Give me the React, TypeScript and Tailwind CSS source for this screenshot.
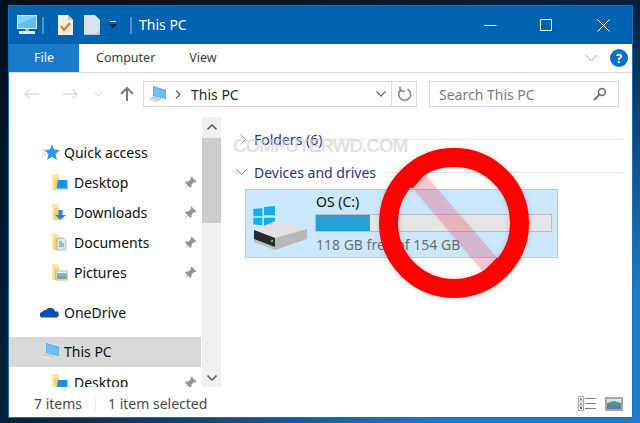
import React from "react";

const Folder = ({ overlay }: { overlay?: React.ReactNode }) => (
  <svg width="17" height="18" viewBox="0 0 17 18" className="shrink-0">
    <path d="M1 1h5l2 2v14H2.500L1 15.500z" fill="#f4d27a" />
    <path d="M1 1h5l2 2v2H3v12H2.500L1 15.500z" fill="#fbe6a8" />
    {overlay}
  </svg>
);

const overlays: Record<string, React.ReactNode> = {
  Desktop: (
    <>
      <path d="M7 7h9.500v9H5.500z" fill="#1e8fe8" />
      <path d="M5 15.500h12V17H5z" fill="#b9dcf5" />
    </>
  ),
  Downloads: (
    <path d="M7.500 7h4v5h3.500l-5.500 5-5.500-5h3.500z" fill="#2f83d6" />
  ),
  Documents: (
    <>
      <path d="M6 5h6l3 3v9H6z" fill="#dfe6ea" stroke="#9fa9ae" strokeWidth="0.8" />
      <path d="M8 9h3M8 11h5M8 13h5" stroke="#4a90c8" />
    </>
  ),
  Pictures: (
    <>
      <path d="M5 8h12v9H5z" fill="#e9eff5" stroke="#9fa9ae" strokeWidth="0.8" />
      <path d="M6 10h10v3H6z" fill="#7fb2e5" />
      <path d="M6 13h10v3H6z" fill="#8aa678" />
    </>
  ),
};

const Pin = () => (
  <svg width="13" height="13" viewBox="0 0 13 13" className="shrink-0">
    <path d="M7.500 0.500l5 5-1.500 1-1-0.500-2.500 2.500 0 2.500-1 1-2.500-2.500-3.500 3.500 3-4-2.500-2.500 1-1 2.500 0 2.500-2.500-0.500-1z" fill="#8f9499" />
  </svg>
);

const Monitor = ({ w = 20 }: { w?: number }) => (
  <svg width={w} height={w} viewBox="0 0 20 20" className="shrink-0">
    <path d="M6 2l13 4v9L6 12z" fill="#3fa6ea" />
    <path d="M6.500 3l12 3.700v7.500L6.500 11.500z" fill="#6fc0f2" />
    <path d="M2 14l5-2 8 2.500-4 3z" fill="#c8ccd0" />
    <path d="M1 16l4-1.500 6 2-3 2z" fill="#dfe2e5" />
  </svg>
);

const NavRow = ({ name }: { name: string }) => (
  <div className="flex h-[30px] items-center pl-[42px] pr-[4px] text-[14px] text-[#101010]">
    <Folder overlay={overlays[name]} />
    <span className="ml-[6px] flex-1">{name}</span>
    <Pin />
  </div>
);

export default function App() {
  return (
    <div className="relative h-[423px] w-[640px] overflow-hidden bg-[linear-gradient(to_bottom_right,#02101f_0%,#04203c_50%,#1c7ccb_85%)] pb-[5px] pl-[8px] pr-[7px] pt-[5px] font-['Noto_Sans',sans-serif]">
      <div className="flex h-full flex-col border border-[#1a6fb5] bg-white">
        {/* title bar */}
        <div className="flex h-[38px] shrink-0 items-center bg-[#0063b1] pl-[8px] text-white">
          <svg width="20" height="20" viewBox="0 0 20 20">
            <path d="M0 0h20v14H0z" fill="#cfe7f7" />
            <path d="M1 1h18v12H1z" fill="#5cc0f2" />
            <path d="M1 1h18L1 10z" fill="#8ad3f7" />
            <path d="M8 14h4v2H8z" fill="#9fb4c4" />
            <path d="M2 16h16v3H2z" fill="#e3e8ec" />
          </svg>
          <span className="ml-[5px] h-[17px] w-[2px] bg-[#4d92c9]" />
          <svg width="15" height="20" viewBox="0 0 15 20" className="ml-[14px]">
            <path d="M0 0h10l5 5v15H0z" fill="#f6ece2" />
            <path d="M10 0v5h5z" fill="#cfc8c0" />
            <path d="M3 11l3 4 6-7" fill="none" stroke="#e8662a" strokeWidth="2" />
          </svg>
          <svg width="16" height="20" viewBox="0 0 16 20" className="ml-[11px]">
            <path d="M0 0h11l5 5v15H0z" fill="#d9e4f2" />
            <path d="M16 15v5H0v-1h12z" fill="#b9c7d8" />
          </svg>
          <svg width="8" height="8" viewBox="0 0 8 8" className="ml-[9px]">
            <path d="M1 0h6v1H1z" fill="#fff" />
            <path d="M0 3h8L4 7z" fill="#061a2c" />
          </svg>
          <span className="ml-[13px] h-[17px] w-[2px] bg-[#4d92c9]" />
          <span className="ml-[7px] text-[14px] leading-none">This PC</span>
          <div className="ml-auto flex items-center pr-[22px]">
            <svg width="13" height="13" viewBox="0 0 13 13">
              <path d="M0 6.500h12.500" stroke="#fff" />
            </svg>
            <svg width="13" height="13" viewBox="0 0 13 13" className="ml-[43px]">
              <path d="M0.500 0.500h11v11h-11z" fill="none" stroke="#fff" />
            </svg>
            <svg width="13" height="13" viewBox="0 0 13 13" className="ml-[44px]">
              <path d="M0.500 0.500l12 12M12.500 0.500l-12 12" stroke="#fff" />
            </svg>
          </div>
        </div>

        {/* ribbon tabs */}
        <div className="flex h-[29px] shrink-0 items-center border-b border-[#dadbdc] text-[12.500px] text-[#3b3b3b]">
          <div className="flex h-full w-[70px] items-center justify-center bg-[#1979ca] text-white">File</div>
          <span className="ml-[17px]">Computer</span>
          <span className="ml-[34px]">View</span>
          <div className="ml-auto flex items-center pr-[4px]">
            <svg width="13" height="8" viewBox="0 0 13 8">
              <path d="M1 1l5.500 6L12 1" fill="none" stroke="#a8a8a8" />
            </svg>
            <div className="ml-[12px] flex h-[18px] w-[18px] items-center justify-center rounded-full bg-[#0a6fc9] text-[13px] font-bold leading-none text-white">
              ?
            </div>
          </div>
        </div>

        {/* address row */}
        <div className="flex h-[42px] shrink-0 items-center pl-[15px]">
          <svg width="16" height="12" viewBox="0 0 16 12">
            <path d="M15 6H1M6 1L1 6l5 5" fill="none" stroke="#dcdcdc" strokeWidth="1.500" />
          </svg>
          <svg width="16" height="12" viewBox="0 0 16 12" className="ml-[22px]">
            <path d="M1 6h14M10 1l5 5-5 5" fill="none" stroke="#dcdcdc" strokeWidth="1.500" />
          </svg>
          <svg width="8" height="5" viewBox="0 0 8 5" className="ml-[16px]">
            <path d="M0.500 0.500L4 4l3.500-3.500" fill="none" stroke="#d0d0d0" />
          </svg>
          <svg width="14" height="16" viewBox="0 0 14 16" className="ml-[18px]">
            <path d="M7 15V2M1 8l6-6 6 6" fill="none" stroke="#7d7d7d" strokeWidth="2" />
          </svg>
          <div className="ml-[9px] flex h-[26px] w-[274px] items-center border border-[#d9d9d9] text-[14px] text-[#2b2b2b]">
            <div className="ml-[3px]">
              <Monitor />
            </div>
            <svg width="6" height="9" viewBox="0 0 6 9" className="ml-[8px]">
              <path d="M1 0.500l4 4-4 4" fill="none" stroke="#5f5f5f" strokeWidth="1.200" />
            </svg>
            <span className="ml-[10px]">This PC</span>
            <svg width="10" height="6" viewBox="0 0 10 6" className="ml-auto mr-[5px]">
              <path d="M0.500 0.500L5 5l4.500-4.500" fill="none" stroke="#6d6d6d" strokeWidth="1.300" />
            </svg>
            <div className="flex h-full w-[25px] items-center justify-center border-l border-[#d9d9d9]">
              <svg width="15" height="16" viewBox="0 0 15 16">
                <path d="M4.500 3.200A6 6 0 1 0 10.500 3" fill="none" stroke="#8a8a8a" strokeWidth="1.600" />
                <path d="M3 0v5h5" fill="none" stroke="#8a8a8a" strokeWidth="1.400" />
              </svg>
            </div>
          </div>
          <div className="ml-[12px] flex h-[26px] w-[190px] items-center border border-[#d9d9d9] pl-[9px] pr-[11px] text-[14px] text-[#7a7a7a]">
            <span>Search This PC</span>
            <svg width="14" height="14" viewBox="0 0 14 14" className="ml-auto">
              <circle cx="9" cy="5" r="3.500" fill="none" stroke="#6f6f6f" strokeWidth="1.600" />
              <path d="M6.500 7.500L1 13" stroke="#6f6f6f" strokeWidth="2" />
            </svg>
          </div>
        </div>

        {/* body */}
        <div className="flex min-h-0 flex-1">
          {/* nav pane */}
          <div className="mb-[3px] w-[192px] shrink-0 overflow-hidden pt-[22px]">
            <div className="flex h-[30px] items-center pl-[33px] text-[14px] text-[#101010]">
              <svg width="18" height="18" viewBox="0 0 18 18" className="shrink-0">
                <path d="M10 1l2 5.500 6 .5-4.500 4 1.500 6-5-3.300L5 17l1.500-6L2 7l6-.5z" fill="#2f96ee" />
                <path d="M0 7h5M0 11h4" stroke="#a8d4f7" />
              </svg>
              <span className="ml-[4px]">Quick access</span>
            </div>
            <NavRow name="Desktop" />
            <NavRow name="Downloads" />
            <NavRow name="Documents" />
            <NavRow name="Pictures" />
            <div className="mt-[10px] flex h-[30px] items-center pl-[31px] text-[14px] text-[#101010]">
              <svg width="19" height="12" viewBox="0 0 19 12" className="shrink-0">
                <path d="M2 11.500a2.800 2.800 0 0 1 0-5.500 4 4 0 0 1 4-2 5 5 0 0 1 9 1.500 3 3 0 0 1 1.500 6z" fill="#0b4fb3" />
              </svg>
              <span className="ml-[5px]">OneDrive</span>
            </div>
            <div className="mt-[10px] flex h-[30px] items-center bg-[#d9d9d9] pb-[2px] pl-[31px] text-[14px] text-[#101010]">
              <Monitor />
              <span className="ml-[4px]">This PC</span>
            </div>
            <NavRow name="Desktop" />
          </div>

          {/* scrollbar */}
          <div className="mb-[3px] ml-px mr-px mt-[2px] flex w-[19px] shrink-0 flex-col bg-[#f0f0f0]">
            <div className="flex h-[21px] shrink-0 items-center justify-center">
              <svg width="10" height="7" viewBox="0 0 10 7">
                <path d="M0.500 5.500L5 1l4.500 4.500" fill="none" stroke="#606060" strokeWidth="1.600" />
              </svg>
            </div>
            <div className="h-[85px] shrink-0 bg-[#cdcdcd]" />
            <div className="flex flex-1 items-end justify-center pb-[6px]">
              <svg width="10" height="7" viewBox="0 0 10 7">
                <path d="M0.500 1.500L5 6l4.500-4.500" fill="none" stroke="#606060" strokeWidth="1.600" />
              </svg>
            </div>
          </div>

          {/* content */}
          <div className="flex-1 pl-[14px] pr-[9px] pt-[14px] text-[#1e3287]">
            <div className="flex h-[20px] items-center text-[14px]">
              <svg width="6" height="11" viewBox="0 0 6 11" className="ml-[4px]">
                <path d="M0.500 0.500l5 5-5 5" fill="none" stroke="#a6a6a6" />
              </svg>
              <span className="ml-[8px]">Folders (6)</span>
              <div className="ml-[4px] h-px flex-1 bg-[#e5e5e5]" />
            </div>
            <div className="mt-[13px] flex h-[20px] items-center text-[14px]">
              <svg width="11" height="6" viewBox="0 0 11 6">
                <path d="M0.500 0.500l5 5 5-5" fill="none" stroke="#7a7a7a" />
              </svg>
              <span className="ml-[7px]">Devices and drives</span>
              <div className="ml-[9px] h-px flex-1 bg-[#e5e5e5]" />
            </div>
            <div className="ml-[9px] mr-[65px] mt-[7px] flex h-[69px] items-center border border-[#99d1ff] bg-[#cce8ff] pl-[7px] pr-[5px]">
              <svg width="54" height="45" viewBox="0 0 54 45" className="mt-[10px] shrink-0">
                <path d="M0.300 3l9-1v8.300h-9zM11 1l11-1v9.300H11zM0.300 11.700h9v7.600l-9-1zM11 11.700h11V21l-11-1.300z" fill="#0fb0f0" />
                <path d="M1 24l24-10 29 9-32 9z" fill="#e2e2e4" />
                <path d="M22 32l32-9v10l-32 11z" fill="#b8b8ba" />
                <path d="M1 24l21 8v12L1 36z" fill="#bdbdbd" />
                <path d="M1 24l21 8v9L1 33z" fill="#2b2b2b" />
                <circle cx="19" cy="35" r="1.200" fill="#3bd05a" />
              </svg>
              <div className="ml-[8px] flex-1">
                <div className="ml-px text-[14px] leading-[20px] text-[#111]">OS (C:)</div>
                <div className="mt-[2px] h-[18px] w-full border border-[#bcbcbc] bg-[#e6e6e6]">
                  <div className="h-full w-[23%] bg-[#26a0da]" />
                </div>
                <div className="ml-px mt-[3px] text-[14px] leading-[20px] text-[#6d6d6d]">118 GB free of 154 GB</div>
              </div>
            </div>
          </div>
        </div>

        {/* status bar */}
        <div className="flex h-[27px] shrink-0 items-center pl-[25px] pr-[9px] text-[14px] text-[#4a4a4a]">
          <span>7 items</span>
          <span className="ml-[13px] h-[17px] w-px bg-[#ececec]" />
          <span className="ml-[12px]">1 item selected</span>
          <svg width="18" height="15" viewBox="0 0 18 15" className="ml-auto">
            <path d="M0.500 0.500h5v14h-5zM0.500 5h5M0.500 10h5" fill="#fff" stroke="#a8a8a8" />
            <path d="M2 2h2v2H2z" fill="#4fa3c7" />
            <path d="M2 7h2v2H2z" fill="#a89f4a" />
            <path d="M2 11h2v2H2z" fill="#c9472f" />
            <path d="M7 2.500h11M7 7.500h11M7 12.500h11" stroke="#7d7d7d" />
          </svg>
          <svg width="18" height="14" viewBox="0 0 18 14" className="ml-[9px]">
            <path d="M1 1h16v12H1z" fill="#cfe3f3" stroke="#a8a8a8" strokeWidth="2" />
            <path d="M2 6l7-2 7 2v2H2z" fill="#5f8f86" />
            <path d="M2 8h14v4H2z" fill="#4c7fb8" />
          </svg>
        </div>
      </div>

      {/* watermark + prohibition sign over the window */}
      <span className="absolute left-[233px] top-[135px] font-['Liberation_Sans',sans-serif] text-[19px] font-bold leading-[22px] tracking-[-1.100px] text-[#cfcfcf]/60">
        COMPUTERWD.COM
      </span>
      <svg width="152" height="152" viewBox="0 0 152 152" className="absolute left-[378px] top-[147px] drop-shadow-[0_0_3px_rgba(0,0,0,0.15)]">
        <path d="M34 40.500L47 27.500 119 110.500 105 125z" fill="#ff4060" fillOpacity="0.27" />
        <path d="M23 27L36 14 47 27.500 34 42zM105 125L119 110.500 129 123 115 138z" fill="#ff0000" />
        <circle cx="76" cy="76" r="65.500" fill="none" stroke="#ff0000" strokeWidth="19" />
      </svg>
    </div>
  );
}
